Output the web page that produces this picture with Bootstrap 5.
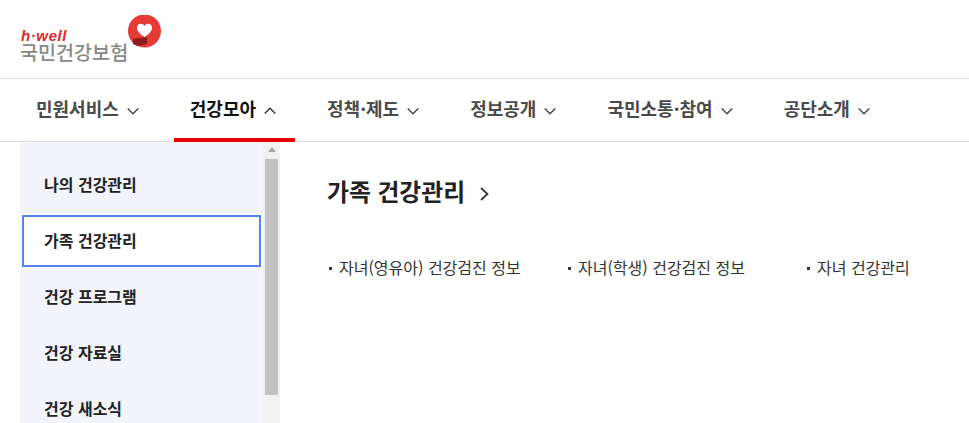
<!DOCTYPE html>
<html lang="ko">
<head>
    <meta charset="UTF-8">
    <meta name="viewport" content="width=device-width, initial-scale=1.0">
    <title>국민건강보험</title>
    <link href="https://cdn.jsdelivr.net/npm/bootstrap@5.3.0/dist/css/bootstrap.min.css" rel="stylesheet">
    <style>
        html, body { height: 423px; overflow: hidden; }
        body { font-family: "Noto Sans CJK KR", "Liberation Sans", sans-serif; color: #222; background: #fff; }
        .site-head { height: 79px; padding: 15px 0 0 20px; border-bottom: 1px solid #ddd; }
        .brand-text { width: 108px; padding-top: 15px; }
        .brand-en { display: block; margin-left: 1px; font: italic 700 15px/12px "Liberation Sans", sans-serif; color: #e4262c; letter-spacing: .6px; }
        .brand-ko { display: block; font-size: 19.6px; line-height: 20px; font-weight: 500; color: #8a8a84; white-space: nowrap; }
        .gnb { height: 63px; padding-left: 20px; gap: 16px; border-bottom: 1px solid #ddd; }
        .gnb-link { height: 63px; padding: 0 16px; font-size: 18px; line-height: 58px; font-weight: 700; color: #4a4a4a; text-decoration: none; white-space: nowrap; }
        .gnb-link.is-open { color: #111; border-bottom: 4px solid #e60000; }
        .chev { width: 12px; height: 8px; margin: 0 3px 0 8px; vertical-align: 1px; }
        .menu-wrap { height: 281px; }
        .side-panel { width: 260px; margin-left: 20px; background: #f2f4fa; overflow: hidden; }
        .side-list { width: 243px; padding: 15px 2px 0 2px; }
        .side-link { display: block; height: 56px; padding-left: 22px; font-size: 16px; line-height: 55px; font-weight: 700; color: #222; text-decoration: none; white-space: nowrap; }
        .side-link.is-focus { height: 52px; margin: 2px 0; padding-left: 20px; line-height: 47px; background: #fff; border: 2px solid #5087ec; box-shadow: 0 0 0 2px #fff; }
        .scroll-track { width: 17px; background: #f1f1f1; padding: 5px 2px 0; }
        .scroll-up { width: 0; height: 0; margin: 0 auto 7px; border: 4px solid transparent; border-top: 0; border-bottom: 5px solid #a3a3a3; }
        .scroll-thumb { width: 13px; height: 236px; background: #c1c1c1; }
        .content-area { padding: 27px 0 0 47px; min-width: 0; }
        .sub-title { font-size: 23.8px; line-height: 44px; font-weight: 700; color: #222; margin: 0 0 42px; white-space: nowrap; }
        .sub-title svg { width: 11px; height: 16px; margin-left: 14px; vertical-align: -1px; }
        .sub-item { width: 239px; padding-left: 12px; font-size: 16px; line-height: 24px; color: #333; position: relative; white-space: nowrap; }
        .sub-item:last-child { width: auto; }
        .sub-item::before { content: ""; position: absolute; left: 2px; top: 12px; width: 3px; height: 3px; background: #333; }
    </style>
</head>
<body>
    <header class="site-head d-flex">
        <div class="brand-text">
            <span class="brand-en">h·well</span>
            <span class="brand-ko">국민건강보험</span>
        </div>
        <!-- 로고 말풍선 -->
        <svg width="33" height="33" viewBox="0 0 33 33">
            <circle cx="16.500" cy="16" r="16.500" fill="#e63a37"/>
            <path d="M16.500 22c-4-2.800-7.500-5.500-7.500-9.300 0-4.200 5.500-5.200 7.500-1.700 2-3.500 7.500-2.500 7.500 1.700 0 3.800-3.500 6.500-7.500 9.300z" fill="#fff"/>
            <path d="M5 24l14-2v7l-9 2-5-2z" fill="#8f1a1c"/>
        </svg>
    </header>

    <nav class="gnb d-flex">
        <a class="gnb-link" href="#">민원서비스<svg class="chev" viewBox="0 0 12 8"><path d="M.7 1.500l5.300 5.300 5.300-5.300" fill="none" stroke="#444" stroke-width="1.400"/></svg></a>
        <a class="gnb-link is-open" href="#">건강모아<svg class="chev" viewBox="0 0 12 8"><path d="M.7 6.500l5.300-5.300 5.300 5.300" fill="none" stroke="#333" stroke-width="1.400"/></svg></a>
        <a class="gnb-link" href="#">정책·제도<svg class="chev" viewBox="0 0 12 8"><path d="M.7 1.500l5.300 5.300 5.300-5.300" fill="none" stroke="#444" stroke-width="1.400"/></svg></a>
        <a class="gnb-link" href="#">정보공개<svg class="chev" viewBox="0 0 12 8"><path d="M.7 1.500l5.300 5.300 5.300-5.300" fill="none" stroke="#444" stroke-width="1.400"/></svg></a>
        <a class="gnb-link" href="#">국민소통·참여<svg class="chev" viewBox="0 0 12 8"><path d="M.7 1.500l5.300 5.300 5.300-5.300" fill="none" stroke="#444" stroke-width="1.400"/></svg></a>
        <a class="gnb-link" href="#">공단소개<svg class="chev" viewBox="0 0 12 8"><path d="M.7 1.500l5.300 5.300 5.300-5.300" fill="none" stroke="#444" stroke-width="1.400"/></svg></a>
    </nav>

    <div class="menu-wrap d-flex">
        <div class="side-panel d-flex flex-shrink-0">
            <div class="side-list flex-shrink-0">
                <a class="side-link" href="#">나의 건강관리</a>
                <a class="side-link is-focus" href="#">가족 건강관리</a>
                <a class="side-link" href="#">건강 프로그램</a>
                <a class="side-link" href="#">건강 자료실</a>
                <a class="side-link" href="#">건강 새소식</a>
            </div>
            <div class="scroll-track flex-shrink-0">
                <div class="scroll-up"></div>
                <div class="scroll-thumb"></div>
            </div>
        </div>
        <div class="content-area flex-grow-1">
            <h2 class="sub-title">가족 건강관리<svg viewBox="0 0 11 16"><path d="M2 2l6.500 6-6.500 6" fill="none" stroke="#333" stroke-width="1.800"/></svg></h2>
            <div class="d-flex">
                <div class="sub-item">자녀(영유아) 건강검진 정보</div>
                <div class="sub-item">자녀(학생) 건강검진 정보</div>
                <div class="sub-item">자녀 건강관리</div>
            </div>
        </div>
    </div>

    <script src="https://cdn.jsdelivr.net/npm/bootstrap@5.3.0/dist/js/bootstrap.bundle.min.js"></script>
</body>
</html>
